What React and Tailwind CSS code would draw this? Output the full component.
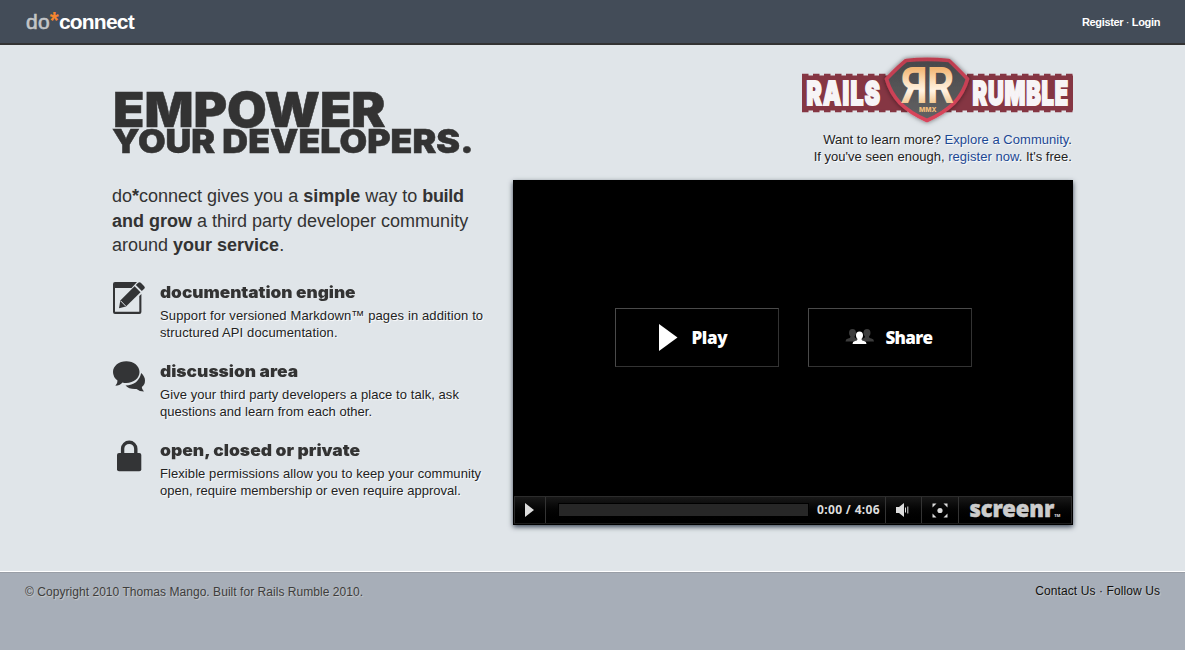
const shadow = "[text-shadow:1px_1px_1px_#fff]";

function EditIcon() {
  return (
    <svg width="32" height="32" viewBox="0 0 32 32" fill="#333436">
      <path d="M2 0H24L18.500 6H2V29.800H26.300V14L28.400 12V30Q28.400 32 26.400 32H2Q0 32 0 30V2Q0 0 2 0Z" />
      <path d="M6 26.300L7.300 18.600L21.600 4.300L27.500 10.200L13 24.600Z" />
      <path d="M7.600 18.800L12.800 24.200" stroke="#e0e5e9" strokeWidth="1" />
      <path d="M22.800 3L25.200 .8Q26.500 -.3 27.800 .8L31.200 4.200Q32.400 5.500 31.200 6.800L28.800 9Z" />
    </svg>
  );
}

function ChatIcon() {
  return (
    <svg width="33" height="32" viewBox="0 0 33 32" fill="#333436">
      <path d="M28.200 12Q32 15.500 32 19.500Q32 23.800 28.800 26Q28.800 28.500 31 30.500Q26.500 30.500 23.500 28Q16 28.500 12.500 24.500Q25.500 24 28.200 12Z" />
      <path d="M13.300 .3C20.700 .3 26.500 5 26.500 11.100S20.700 22 13.300 22Q11.200 22 9.500 21.500Q6.500 24.800 2.400 24.800Q4.700 22.500 4.500 19.600Q0 16.300 0 11.100C0 5 5.900 .3 13.300 .3Z" />
    </svg>
  );
}

function LockIcon() {
  return (
    <svg width="32" height="32" viewBox="0 0 32 32">
      <rect x="4" y="13" width="24.300" height="18.300" rx="2" fill="#333436" />
      <path d="M9.600 14V8.800a6.600 6.600 0 0 1 13.200 0V14" fill="none" stroke="#333436" strokeWidth="3.400" />
    </svg>
  );
}

function RumbleLogo() {
  const white = { fill: "#f7f4f6", stroke: "#f7f4f6", strokeWidth: 1.9, fontWeight: 900, fontSize: 32.5 };
  return (
    <svg width="271" height="76" viewBox="802 52 271 76" className="block" fontFamily="Inter, sans-serif">
      <defs>
        <linearGradient id="gold" x1="0" y1="0" x2="0" y2="1">
          <stop offset="0.2" stopColor="#f2b775" />
          <stop offset="0.45" stopColor="#fce3c3" />
          <stop offset="0.58" stopColor="#fff3e3" />
          <stop offset="0.85" stopColor="#eebd80" />
        </linearGradient>
        <linearGradient id="rim" x1="0" y1="0" x2="0" y2="1">
          <stop offset="0" stopColor="#bd3e50" />
          <stop offset="1" stopColor="#d9455b" />
        </linearGradient>
        <linearGradient id="plate" x1="0" y1="0" x2="0" y2="1">
          <stop offset="0" stopColor="#48484a" />
          <stop offset="1" stopColor="#626264" />
        </linearGradient>
        <filter id="glow" x="-20%" y="-20%" width="140%" height="140%">
          <feDropShadow dx="0" dy="0" stdDeviation="2.500" floodColor="#000" floodOpacity="0.550" />
        </filter>
      </defs>
      <rect x="802" y="75.500" width="271" height="35" fill="#853643" />
      <path d="M802 75H1073M802 111H1073" stroke="#853643" strokeWidth="2.600" strokeDasharray="6.500 4.500" />
      <text transform="translate(806.500 105) scale(.705 1)" letterSpacing="1.800" {...white}>RAILS</text>
      <text transform="translate(972.500 105) scale(.67 1)" letterSpacing="1.300" {...white}>RUMBLE</text>
      <path
        d="M906 60.500Q927 58.300 949 60.500Q956 67 967.500 79Q963.500 93 954 103Q944 113 927 120.500Q910 113 900 103Q890.500 93 886.500 79Q898 67 906 60.500Z"
        fill="url(#plate)" stroke="url(#rim)" strokeWidth="3.600" strokeLinejoin="round" filter="url(#glow)"
      />
      <g fontFamily="Roboto, sans-serif" fontWeight="700" fontSize="50" fill="url(#gold)">
        <text transform="translate(927.800 103.300) scale(-.86 1)">R</text>
        <text transform="translate(926.700 103.300) scale(.86 1)">R</text>
      </g>
      <text x="919" y="111.800" fontSize="6.600" fontWeight="800" fill="#f2bd7c">MMX</text>
    </svg>
  );
}

function Feature({ icon, title, titleClass, lines, lineClasses }) {
  return (
    <li className="flex h-[79px]">
      <div className="w-[48px] shrink-0 pl-px">{icon}</div>
      <div className="-mt-px whitespace-nowrap">
        <h3 className={`origin-left font-[Inter,sans-serif] text-[16px] leading-[22px] font-black text-[#333] ${titleClass}`}>{title}</h3>
        <p className={`mt-[4px] text-[13px] leading-[17px] text-[#222] ${shadow}`}>
          <span className={lineClasses[0]}>{lines[0]}</span><br />
          <span className={lineClasses[1]}>{lines[1]}</span>
        </p>
      </div>
    </li>
  );
}

function Person({ x, y, fill }) {
  return (
    <path
      transform={`translate(${x} ${y})`} fill={fill}
      d="M7 0C9.300 0 10.500 1.500 10.500 3.700C10.500 5.500 9.800 6.700 9 7.400C9 8.800 10 9.100 11.500 9.500Q14 10.200 14 12.500H0Q0 10.200 2.500 9.500C4 9.100 5 8.800 5 7.400C4.200 6.700 3.500 5.500 3.500 3.700C3.500 1.500 4.700 0 7 0Z"
    />
  );
}

function Player() {
  const cell = "flex h-full items-center justify-center border-l border-[#333]";
  const button = "flex h-[59px] w-[164px] items-center border border-[#4a4a4a] border-r-[#333] border-b-[#333]";
  return (
    <div className="flex h-[345px] w-[560px] flex-col bg-black px-px pb-px shadow-[0_2px_5px_#3d4857]">
      <div className="flex flex-1 items-center justify-center gap-[29px] pb-[2px] font-['Open_Sans',sans-serif] text-[17px] font-extrabold text-white">
        <button className={`${button} pl-[43px]`}>
          <svg width="19" height="27" viewBox="0 0 19 27"><path d="M0 0L18.500 13.500L0 27Z" fill="#fff" /></svg>
          <span className="ml-[14px] pt-px tracking-[-0.4px]">Play</span>
        </button>
        <button className={`${button} pl-[36px]`}>
          <svg width="30" height="16" viewBox="0 0 30 16">
            <Person x={0.5} y={0} fill="#3c3c3c" />
            <Person x={15} y={0} fill="#3c3c3c" />
            <Person x={7.5} y={2.5} fill="#fff" />
          </svg>
          <span className="ml-[11px] pt-[2px] tracking-[-0.7px]">Share</span>
        </button>
      </div>
      <div className="flex h-[28px] items-center border border-[#2c2c2c] border-b-[#1c1c1c] bg-linear-to-b from-[#191919] to-black">
        <div className="flex h-full w-[31px] items-center justify-center border-r border-[#333] pr-[2px]">
          <svg width="9" height="14" viewBox="0 0 9 14"><path d="M0 0L9 7L0 14Z" fill="#ddd" /></svg>
        </div>
        <div className="ml-[12px] h-[14px] w-[251px] border border-black bg-[#272727]" />
        <span className="ml-[8px] w-[68px] font-['Noto_Sans',sans-serif] text-[12px] font-bold tracking-[0.35px] whitespace-nowrap text-[#ddd]">0:00 / 4:06</span>
        <div className={`${cell} w-[36px] pr-[2px]`}>
          <svg width="13" height="14" viewBox="0 0 13 14" fill="#ddd">
            <path d="M0 4H3L8 0V14L3 10H0ZM9 4.500H10V9.500H9ZM11.300 3.500H12.300V10.500H11.300Z" />
          </svg>
        </div>
        <div className={`${cell} w-[37px] pr-px`}>
          <svg width="16" height="15" viewBox="0 0 16 15" fill="#ddd">
            <circle cx="8" cy="7.500" r="2.600" />
            <path d="M.5 .5H4.500L.5 4.500ZM15.500 .5H11.500L15.500 4.500ZM.5 14.500H4.500L.5 10.500ZM15.500 14.500H11.500L15.500 10.500Z" />
          </svg>
        </div>
        <div className={`${cell} flex-1 pb-[5px] font-['Noto_Sans',sans-serif] text-[22px] leading-none font-black tracking-[-0.1px] text-[#ccc] [-webkit-text-stroke:0.5px_#ccc]`}>
          screenr<span className="self-end text-[4px] tracking-normal [-webkit-text-stroke:0]">TM</span>
        </div>
      </div>
    </div>
  );
}

export default function App() {
  return (
    <div className="flex h-[650px] w-[1185px] flex-col overflow-hidden bg-[#a7aeb8] font-['Liberation_Sans',Arial,sans-serif]">
      <header className="flex h-[45px] items-center justify-between border-b-2 border-[#333] bg-[#434c58] px-[25px] font-bold text-white">
        <h1 className="flex text-[21px] leading-[24px] tracking-[-0.8px]">
          <span className="pl-px font-normal tracking-[0.2px] text-[#c4c6c8] [-webkit-text-stroke:0.6px_#c4c6c8]">do</span>
          <span className="-translate-y-[1px] text-[23px] tracking-[0.2px] text-[#f5852f]">*</span>
          <span>connect</span>
        </h1>
        <nav className="text-[11px] leading-[16px] tracking-[-0.36px] whitespace-nowrap">Register <span className="font-normal">·</span> Login</nav>
      </header>

      <main className="flex h-[526px] bg-[#e0e5e9] pl-[112px]">
        <section className="w-[401px] pt-[41px]">
          <h2 className="font-[Inter,sans-serif] font-black whitespace-nowrap text-[#333]">
            <span className="block origin-left translate-x-px scale-x-[1.068] text-[48px] leading-[48px] [-webkit-text-stroke:0.5px_#333]">EMPOWER</span>
            <span className="-mt-[2px] block origin-left scale-x-[1.099] text-[32.500px] leading-[20px] [-webkit-text-stroke:0.5px_#333]">YOUR DEVELOPERS.</span>
          </h2>
          <p className="mt-[32px] text-[18px] leading-[24.500px] whitespace-nowrap text-[#333]">
            do<b>*</b>connect gives you a <b>simple</b> way to <b className="tracking-[-0.3px]">build</b><br /><b>and grow</b> a third party developer community<br />around <b>your service</b>.
          </p>
          <ul className="mt-[24px]">
            <Feature
              icon={<EditIcon />} title="documentation engine" titleClass="scale-x-[1.077]"
              lines={["Support for versioned Markdown™ pages in addition to", "structured API documentation."]}
              lineClasses={["tracking-[0.115px]", "tracking-[0.12px]"]}
            />
            <Feature
              icon={<ChatIcon />} title="discussion area" titleClass="scale-x-[1.087]"
              lines={["Give your third party developers a place to talk, ask", "questions and learn from each other."]}
              lineClasses={["tracking-[0.065px]", "tracking-[0.03px]"]}
            />
            <Feature
              icon={<LockIcon />} title="open, closed or private" titleClass="scale-x-[1.093]"
              lines={["Flexible permissions allow you to keep your community", "open, require membership or even require approval."]}
              lineClasses={["tracking-[0.075px]", "tracking-[0.02px]"]}
            />
          </ul>
        </section>
        <section className="flex w-[560px] flex-col items-end pt-[7px]">
          <RumbleLogo />
          <p className={`mt-[3px] mb-[15px] pr-px text-right text-[13px] leading-[17px] tracking-[0.025px] text-[#222] ${shadow}`}>
            Want to learn more? <a className="text-[#1c4894]">Explore a Community</a>.<br />
            If you've seen enough, <a className="text-[#1c4894]">register now</a>. It's free.
          </p>
          <Player />
        </section>
      </main>

      <footer className="flex flex-1 items-start justify-between border-t border-white px-[25px] text-[12px] leading-[16px]">
        <div className="-mx-[25px] flex flex-1 justify-between border-t border-[#999ea6] px-[25px] pt-[11px]">
          <p className="tracking-[0.045px] text-[#3d3d3d] [text-shadow:1px_1px_1px_#ccc]">© Copyright 2010 Thomas Mango. Built for Rails Rumble 2010.</p>
          <p className="-mt-px tracking-[0.09px] text-[#111] [text-shadow:1px_1px_1px_#ccc]">Contact Us · Follow Us</p>
        </div>
      </footer>
    </div>
  );
}
